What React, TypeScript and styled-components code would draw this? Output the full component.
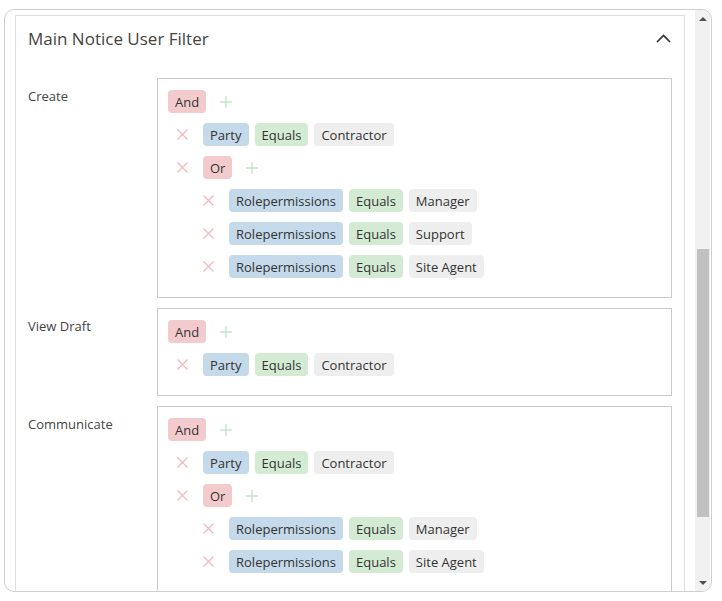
import React from "react";
import { styled, createGlobalStyle } from "styled-components";

const GlobalStyle = createGlobalStyle`
  body {
    margin: 0;
    background: #fff;
    font-family: "Open Sans", "Noto Sans", sans-serif;
    color: #333;
  }
`;

type Rule = { kind: "rule"; field: string; op: string; value: string };
type Group = { kind: "group"; op: "And" | "Or"; children: QueryNode[] };
type QueryNode = Rule | Group;

const rule = (field: string, value: string): Rule => ({ kind: "rule", field, op: "Equals", value });

const filters: { label: string; query: Group }[] = [
  {
    label: "Create",
    query: {
      kind: "group",
      op: "And",
      children: [
        rule("Party", "Contractor"),
        {
          kind: "group",
          op: "Or",
          children: [
            rule("Rolepermissions", "Manager"),
            rule("Rolepermissions", "Support"),
            rule("Rolepermissions", "Site Agent"),
          ],
        },
      ],
    },
  },
  {
    label: "View Draft",
    query: { kind: "group", op: "And", children: [rule("Party", "Contractor")] },
  },
  {
    label: "Communicate",
    query: {
      kind: "group",
      op: "And",
      children: [
        rule("Party", "Contractor"),
        {
          kind: "group",
          op: "Or",
          children: [rule("Rolepermissions", "Manager"), rule("Rolepermissions", "Site Agent")],
        },
      ],
    },
  },
];

// scroll position of the panel, in track pixels
const scroll = { before: 222, thumb: 267, after: 57 };

const Frame = styled.div`
  margin: 9px 0 0 4px;
  width: 708px;
  height: 583px;
  box-sizing: border-box;
  border: 1px solid #cfcfcf;
  border-radius: 10px;
  overflow: hidden;
  display: flex;
`;

const Viewport = styled.div`
  flex: 1;
  overflow: hidden;
  padding: 5px 10px 0 10px;
`;

const Card = styled.section`
  border: 1px solid #dedede;
  border-bottom: none;
`;

const CardHeader = styled.div`
  display: flex;
  align-items: center;
  justify-content: space-between;
  padding: 10px 13px 11px 12px;
`;

const Title = styled.h2`
  margin: 0;
  font-size: 17px;
  font-weight: 400;
  line-height: 25px;
  color: #444;
`;

const CardBody = styled.div`
  display: flex;
  flex-direction: column;
  gap: 10px;
  padding: 16px 12px 0 12px;
`;

const FilterRow = styled.div`
  display: flex;
  align-items: flex-start;
`;

const Label = styled.div`
  width: 129px;
  flex-shrink: 0;
  padding-top: 9px;
  font-size: 13px;
  line-height: 18px;
  color: #444;
`;

const QueryBox = styled.div`
  flex: 1;
  border: 1px solid #cacaca;
  padding: 11px 10px 19px 10px;
`;

const GroupBox = styled.div`
  display: flex;
  flex-direction: column;
  gap: 10px;
`;

const GroupHead = styled.div`
  display: flex;
  align-items: center;
  gap: 14px;
`;

const Children = styled.div<{ $nested: boolean }>`
  display: flex;
  flex-direction: column;
  gap: 10px;
  padding-left: ${(p) => (p.$nested ? 0 : 9)}px;
`;

const Row = styled.div`
  display: flex;
  align-items: flex-start;
`;

const RemoveBtn = styled.span`
  width: 11px;
  height: 23px;
  margin-right: 15px;
  display: flex;
  align-items: center;
  flex-shrink: 0;
  color: #f2b8bb;
`;

const AddBtn = styled.span`
  display: flex;
  align-items: center;
  color: #c6e5c6;
`;

const Chips = styled.div`
  display: flex;
  gap: 6px;
`;

const tones = {
  op: "#f4cbcd",
  field: "#c4d9ea",
  operator: "#d3ebd3",
  value: "#eeeeee",
};

const Chip = styled.span<{ $tone: keyof typeof tones }>`
  display: inline-flex;
  align-items: center;
  height: 23px;
  padding: 0 7px;
  border-radius: 4px;
  background: ${(p) => tones[p.$tone]};
  font-size: 13px;
  color: #333;
  white-space: nowrap;
`;

const Scrollbar = styled.div`
  width: 15px;
  margin-right: 1px;
  background: #f1f1f1;
  display: flex;
  flex-direction: column;
`;

const ScrollButton = styled.div`
  height: 17px;
  flex-shrink: 0;
  display: flex;
  align-items: center;
  justify-content: center;
`;

const Track = styled.div`
  flex: 1;
  display: flex;
  flex-direction: column;
`;

const Thumb = styled.div`
  margin: 0 1px 0 2px;
  background: #c1c1c1;
`;

const Cross = () => (
  <svg width="11" height="11" viewBox="0 0 11 11">
    <path d="M0.5 0.5 L10.5 10.5 M10.5 0.5 L0.5 10.5" stroke="currentColor" strokeWidth="1.2" fill="none" />
  </svg>
);

const Plus = () => (
  <svg width="12" height="12" viewBox="0 0 12 12">
    <path d="M6 0 V12 M0 6 H12" stroke="currentColor" strokeWidth="1.4" fill="none" />
  </svg>
);

const ChevronUp = () => (
  <svg width="15" height="9" viewBox="0 0 15 9">
    <path d="M1 8 L7.5 1.5 L14 8" stroke="#333" strokeWidth="1.7" fill="none" />
  </svg>
);

const Arrow = ({ up }: { up?: boolean }) => (
  <svg width="8" height="4" viewBox="0 0 8 4">
    <path d={up ? "M0 4 L4 0 L8 4 Z" : "M0 0 L8 0 L4 4 Z"} fill="#505050" />
  </svg>
);

const QueryGroup = ({ group, nested = false }: { group: Group; nested?: boolean }) => (
  <GroupBox>
    <GroupHead>
      <Chip $tone="op">{group.op}</Chip>
      <AddBtn>
        <Plus />
      </AddBtn>
    </GroupHead>
    <Children $nested={nested}>
      {group.children.map((child, i) => (
        <Row key={i}>
          <RemoveBtn>
            <Cross />
          </RemoveBtn>
          {child.kind === "rule" ? (
            <Chips>
              <Chip $tone="field">{child.field}</Chip>
              <Chip $tone="operator">{child.op}</Chip>
              <Chip $tone="value">{child.value}</Chip>
            </Chips>
          ) : (
            <QueryGroup group={child} nested />
          )}
        </Row>
      ))}
    </Children>
  </GroupBox>
);

export default function App() {
  return (
    <>
      <GlobalStyle />
      <Frame>
        <Viewport>
          <Card>
            <CardHeader>
              <Title>Main Notice User Filter</Title>
              <ChevronUp />
            </CardHeader>
            <CardBody>
              {filters.map((f) => (
                <FilterRow key={f.label}>
                  <Label>{f.label}</Label>
                  <QueryBox>
                    <QueryGroup group={f.query} />
                  </QueryBox>
                </FilterRow>
              ))}
            </CardBody>
          </Card>
        </Viewport>
        <Scrollbar>
          <ScrollButton>
            <Arrow up />
          </ScrollButton>
          <Track>
            <div style={{ flexGrow: scroll.before }} />
            <Thumb style={{ flexGrow: scroll.thumb }} />
            <div style={{ flexGrow: scroll.after }} />
          </Track>
          <ScrollButton>
            <Arrow />
          </ScrollButton>
        </Scrollbar>
      </Frame>
    </>
  );
}
